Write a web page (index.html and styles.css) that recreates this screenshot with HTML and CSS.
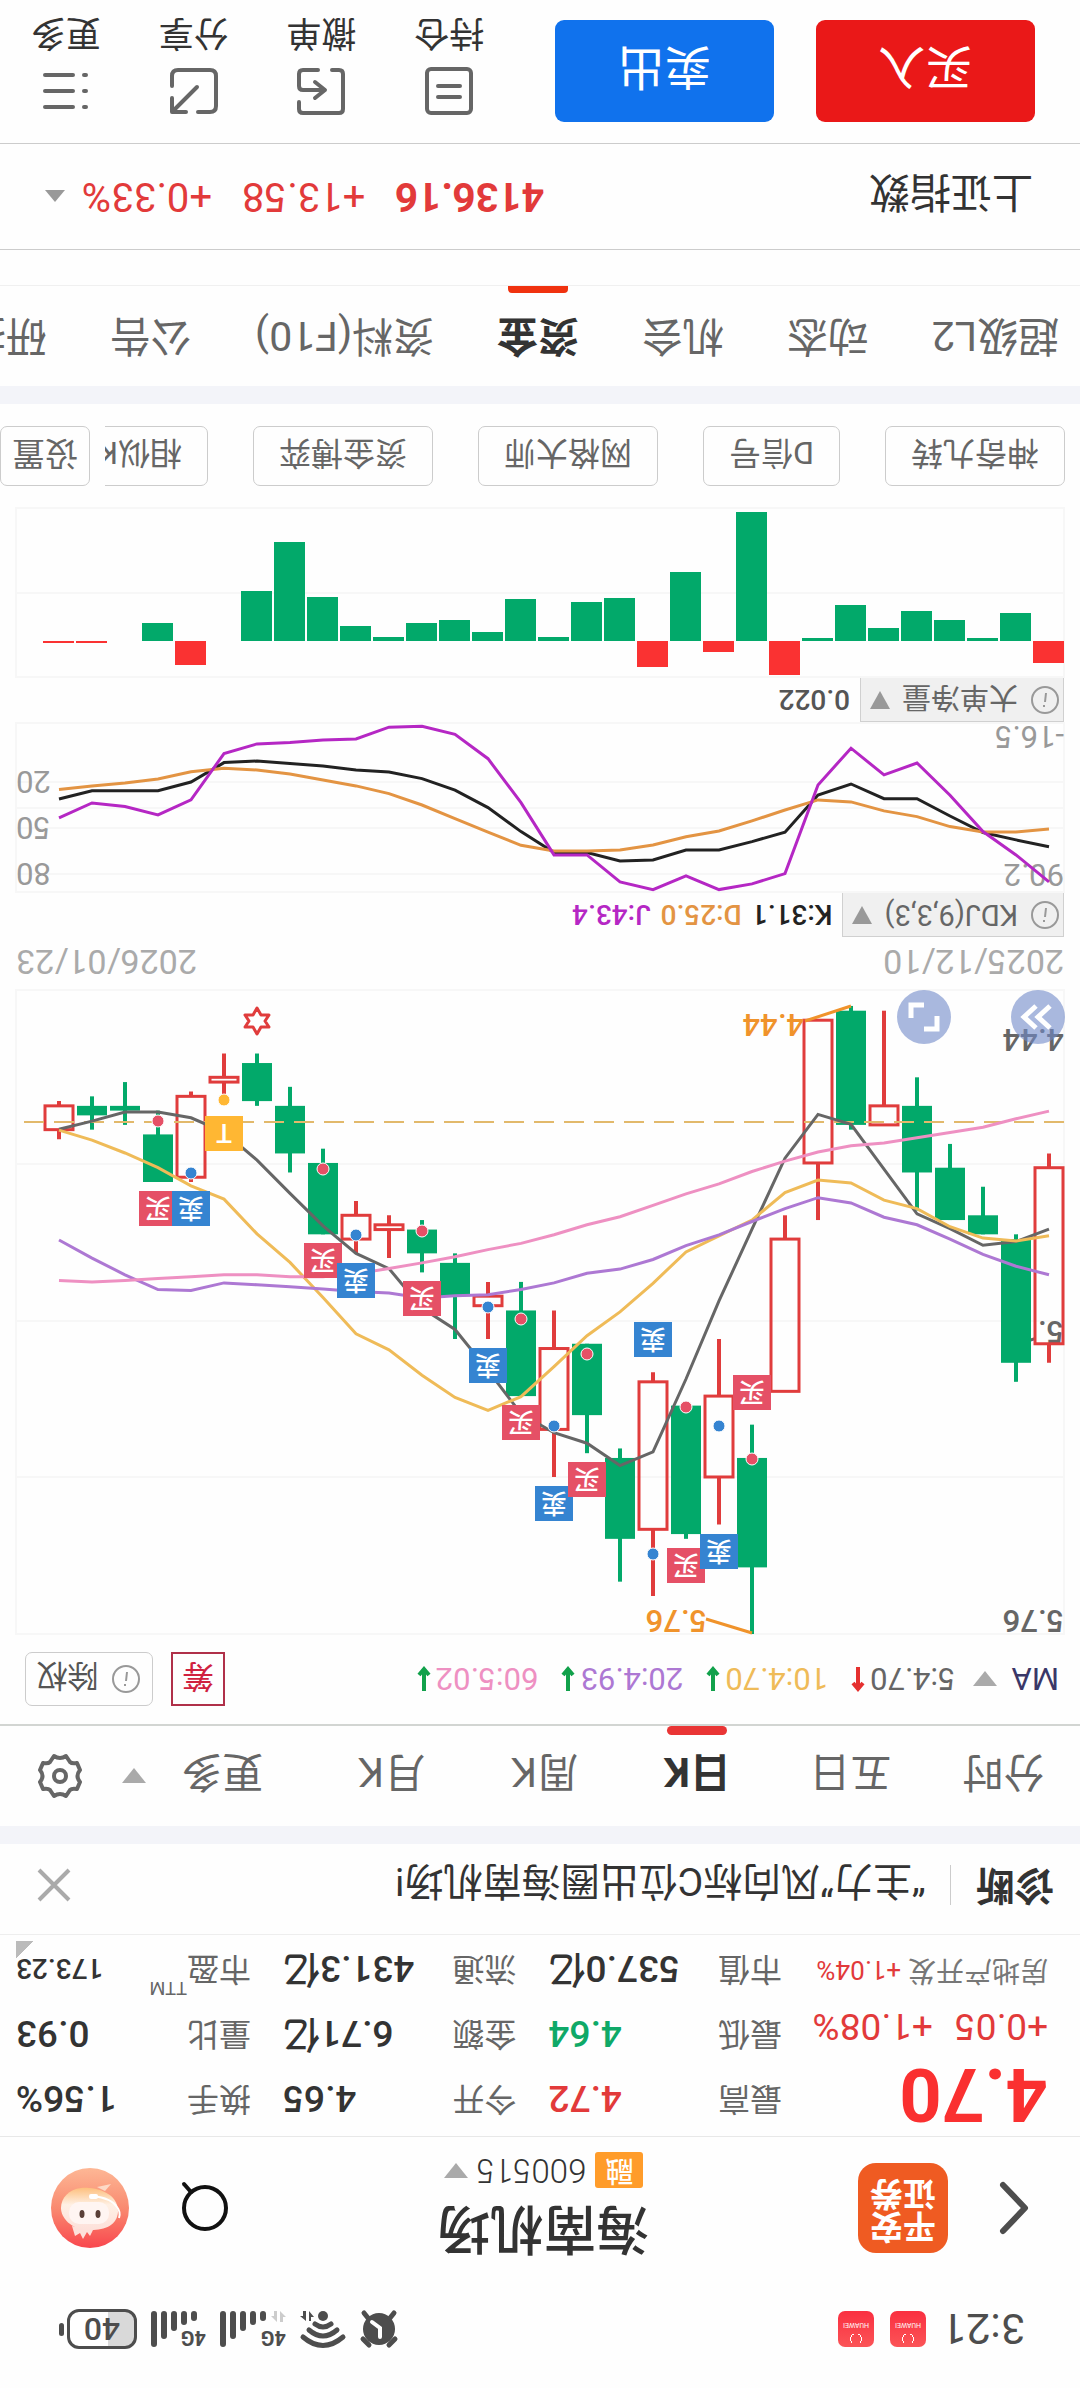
FILE: index.html
```html
<!DOCTYPE html>
<html lang="zh-CN">
<head>
    <meta charset="UTF-8">
    <meta name="viewport" content="width=device-width, initial-scale=1">
    <title>海南机场 600515</title>
    <link rel="stylesheet" href="styles.css">
</head>
<body>
<div class="phone">

    <div class="status-bar">
        <span class="clock">3:21</span>
        <span class="app-badge">HUAWEI</span>
        <span class="app-badge">HUAWEI</span>
        <div class="status-icons">
            <svg width="38" height="38" viewBox="0 0 38 38" fill="none" stroke="#4d4d4d" stroke-width="5" stroke-linecap="round">
                <circle cx="19" cy="19" r="16" fill="#4d4d4d" stroke="none"/>
                <path d="M3 9l6-6M35 9l-6-6M8 30l-4 5M30 30l4 5"/>
                <path d="M18 11v9l8 6" stroke="#fff" stroke-width="4"/>
            </svg>
            <svg width="46" height="38" viewBox="0 0 46 38" fill="none" stroke="#4d4d4d" stroke-width="5" stroke-linecap="round">
                <path d="M3 11q20-17 40 0M9 18q14-12 28 0M15 24q8-6 16 0"/>
                <circle cx="23" cy="32" r="5" fill="#4d4d4d" stroke="none"/>
                <path d="M37 27v10l-5-6h3v-4zM40 37v-10l6 5h-3v5z" fill="#4d4d4d" stroke="none"/>
            </svg>
            <svg width="66" height="38" viewBox="0 0 66 38" fill="none" stroke="#4d4d4d" stroke-width="6" stroke-linecap="round">
                <path d="M23 30v4M33 26v8M43 20v14M53 12v22M63 4v30"/>
                <path d="M6 26v11l-6-6h3v-5zM9 37v-11l6 6h-3v5z" fill="#ccc" stroke="none"/>
                <text class="net" x="0" y="17">4G</text>
            </svg>
            <svg width="55" height="38" viewBox="0 0 55 38" fill="none" stroke="#4d4d4d" stroke-width="6" stroke-linecap="round">
                <path d="M12 30v4M22 26v8M32 20v14M42 12v22M52 4v30"/>
                <text class="net" x="0" y="17">4G</text>
            </svg>
            <span class="battery">40</span>
        </div>
    </div>

    <header class="title-bar">
        <button class="icon-btn" aria-label="返回">
            <svg width="30" height="54" viewBox="0 0 30 54" fill="none" stroke="#4d4d4d" stroke-width="6" stroke-linecap="round" stroke-linejoin="round"><path d="M26 4L4 27l22 23"/></svg>
        </button>
        <a class="broker" href="#">平安<br>证券</a>
        <div class="stock">
            <h1>海南机场</h1>
            <p><span class="rong">融</span>600515<i class="down"></i></p>
        </div>
        <button class="icon-btn" aria-label="搜索">
            <svg width="48" height="54" viewBox="0 0 48 54" fill="none" stroke="#111" stroke-width="4" stroke-linecap="round"><circle cx="24" cy="27" r="21"/><path d="M38 43l7 8"/></svg>
        </button>
        <button class="icon-btn avatar" aria-label="智能助手">
            <svg width="78" height="80" viewBox="0 0 78 80">
                <defs>
                    <linearGradient id="skin" x1="0" y1="0" x2="0" y2="1"><stop offset="0" stop-color="#f9474e"/><stop offset=".5" stop-color="#f98a70"/><stop offset="1" stop-color="#fdb795"/></linearGradient>
                    <linearGradient id="hood" x1="0" y1="0" x2="0" y2="1"><stop offset="0" stop-color="#fde0da"/><stop offset=".6" stop-color="#fff0e4"/><stop offset="1" stop-color="#fdc07e"/></linearGradient>
                </defs>
                <ellipse cx="39" cy="40" rx="39" ry="40" fill="url(#skin)"/>
                <path d="M36 18l3-6 3 4 4-7 3 6 5-3 3 10z" fill="#fde0da"/>
                <path d="M24 57l-6 7 14-3z" fill="#fcd9c6"/>
                <path d="M11 36C12 22 26 17 42 18s26 12 26 22-8 19-20 20-37-3-37-24z" fill="url(#hood)"/>
                <rect x="20" y="24" width="40" height="22" rx="10" fill="#fff5f2"/>
                <ellipse cx="31" cy="34" rx="2.5" ry="4" fill="#5a4038"/>
                <ellipse cx="47" cy="34" rx="2.5" ry="4" fill="#5a4038"/>
                <path d="M10 30q-2 6 2 11 6 9 24 11" fill="none" stroke="#fff" stroke-width="2"/>
                <rect x="31" y="49" width="9" height="5" rx="2" fill="#fff"/>
            </svg>
        </button>
    </header>

    <section class="quote">
        <div class="price">
            <strong>4.70</strong>
            <p class="change"><span>+0.05</span><span>+1.08%</span></p>
            <p class="sector">房地产开发 <span>+1.04%</span></p>
        </div>
        <table>
            <tr><th>最高</th><td class="red">4.72</td><th>今开</th><td>4.65</td><th>换手</th><td>1.56%</td></tr>
            <tr><th>最低</th><td class="green">4.64</td><th>金额</th><td>6.71亿</td><th>量比</th><td>0.93</td></tr>
            <tr><th>市值</th><td>537.0亿</td><th>流通</th><td>431.3亿</td><th>市盈<sup>TTM</sup></th><td class="pe">173.23</td></tr>
        </table>
    </section>

    <section class="diagnose">
        <b>诊断</b>
        <a href="#">“主力”风向标C位出圈海南机场!</a>
        <button class="icon-btn" aria-label="关闭">
            <svg width="32" height="32" viewBox="0 0 32 32" stroke="#aaa" stroke-width="4"><path d="M1 1l30 30M31 1L1 31"/></svg>
        </button>
    </section>

    <div class="band"></div>

    <nav class="periods">
        <button>分时</button>
        <button>五日</button>
        <button class="on">日K</button>
        <button>周K</button>
        <button>月K</button>
        <button class="more">更多</button>
        <i class="down"></i>
        <button class="gear" aria-label="设置">
            <svg width="44" height="44" viewBox="0 0 44 44" fill="none" stroke="#666" stroke-width="4" stroke-linejoin="round"><path d="M16 2q6 4 12 0l4 6q2 2 7 1l3 7q-5 6 0 12l-3 7q-5-1-7 1l-4 6q-6-4-12 0l-4-6q-2-2-7-1l-3-7q5-6 0-12l3-7q5 1 7-1z"/><circle cx="22" cy="22" r="6"/></svg>
        </button>
    </nav>

    <section class="ma-row">
        <span class="ma-name">MA</span><i class="down"></i>
        <span class="ma5">5:4.70</span><svg class="arrow" viewBox="0 0 16 24"><path d="M8 24V4M3 8l5-6 5 6" stroke="#e5302f"/></svg>
        <span class="ma10">10:4.70</span><svg class="arrow" viewBox="0 0 16 24"><path d="M8 0v20M3 16l5 6 5-6" stroke="#11a14b"/></svg>
        <span class="ma20">20:4.93</span><svg class="arrow" viewBox="0 0 16 24"><path d="M8 0v20M3 16l5 6 5-6" stroke="#11a14b"/></svg>
        <span class="ma60">60:5.02</span><svg class="arrow" viewBox="0 0 16 24"><path d="M8 0v20M3 16l5 6 5-6" stroke="#11a14b"/></svg>
        <button class="chip-dist">筹</button>
        <button class="adjust"><svg class="info" viewBox="0 0 30 30"><circle cx="15" cy="15" r="13"/><path d="M16 8v2M15 13l-1 9"/></svg>除权</button>
    </section>

    <svg class="chart" id="kline" viewBox="0 0 1048 644"></svg>

    <div class="dates"><span>2025/12/10</span><span>2026/01/23</span></div>

    <div class="indicator">
        <button><svg class="info" viewBox="0 0 30 30"><circle cx="15" cy="15" r="13"/><path d="M16 8v2M15 13l-1 9"/></svg>KDJ(9,3,3)<i class="down"></i></button>
        <span class="k">K:31.1</span><span class="d">D:25.0</span><span class="j">J:43.4</span>
    </div>
    <svg class="chart" id="kdj" viewBox="0 0 1048 169"></svg>

    <div class="indicator">
        <button><svg class="info" viewBox="0 0 30 30"><circle cx="15" cy="15" r="13"/><path d="M16 8v2M15 13l-1 9"/></svg>大单净量<i class="down"></i></button>
        <span>0.022</span>
    </div>
    <svg class="chart" id="netflow" viewBox="0 0 1048 169"></svg>

    <div class="tools">
        <div class="tool-list">
            <button>神奇九转</button>
            <button>D信号</button>
            <button>网格大师</button>
            <button>资金博弈</button>
            <button>相似K线</button>
        </div>
        <button class="setup">设置</button>
    </div>

    <div class="band"></div>

    <nav class="tabs">
        <a href="#">超级L2</a>
        <a href="#">动态</a>
        <a href="#">机会</a>
        <a href="#" class="on">资金</a>
        <a href="#">资料(F10)</a>
        <a href="#">公告</a>
        <a href="#">研报</a>
    </nav>

    <div class="index-row">
        <span class="index-name">上证指数</span>
        <b>4136.16</b>
        <span>+13.58</span>
        <span>+0.33%</span>
        <i class="up"></i>
    </div>

    <footer class="actions">
        <button class="trade buy">买入</button>
        <button class="trade sell">卖出</button>
        <button class="act">
            <svg viewBox="0 0 48 48"><rect x="2" y="2" width="44" height="44" rx="4"/><path d="M13 18h22M13 29h22"/></svg>
            持仓
        </button>
        <button class="act">
            <svg viewBox="0 0 48 48"><path d="M27 45h15q4 0 4-4V29q0-4-4-4H22M30 33l-10-8 10-8M13 45H6q-4 0-4-4V6q0-4 4-4h36q4 0 4 4v7"/></svg>
            撤单
        </button>
        <button class="act">
            <svg viewBox="0 0 48 48"><path d="M46 29v10q0 6-6 6H8q-6 0-6-6V9q0-6 6-6h12M21 28L45 4M46 17V3H32"/></svg>
            分享
        </button>
        <button class="act">
            <svg viewBox="0 0 48 48"><path d="M4 8h2M17 8h28M4 24h2M17 24h28M4 40h2M17 40h28"/></svg>
            更多
        </button>
    </footer>

</div>
<script src="chart.js"></script>
</body>
</html>
```
FILE: styles.css
```css
* {
    box-sizing: border-box;
}
body, h1, p, table {
    margin: 0;
    padding: 0;
}
body {
    background: #fff;
    color: #333;
    font-family: Roboto, "Noto Sans CJK SC", sans-serif;
    overflow-x: hidden;
}
button {
    margin: 0;
    padding: 0;
    border: 0;
    background: none;
    color: inherit;
    font: inherit;
    white-space: nowrap;
}
a {
    color: inherit;
    text-decoration: none;
}
svg {
    display: block;
    flex-shrink: 0;
    overflow: visible;
}
.phone {
    background: #fefefe;
    overflow: hidden;
    transform: rotate(180deg);
}
.icon-btn {
    display: flex;
}
.down, .up {
    border: 12px solid transparent;
    border-top: 15px solid #aaa;
    border-bottom: 0;
}
.up {
    border-width: 0 10px 12px;
    border-bottom: 12px solid #999;
}
.band {
    height: 18px;
    background: #f3f4f9;
}

/* status bar */
.status-bar {
    display: flex;
    align-items: center;
    gap: 16px;
    height: 118px;
    padding: 0 59px 0 55px;
}
.clock {
    color: #4d4d4d;
    font-size: 43px;
}
.app-badge {
    width: 36px;
    height: 36px;
    padding-top: 14px;
    border-radius: 7px;
    background: radial-gradient(circle at 18px 4px, transparent 5px, #fff 5px, #fff 6px, transparent 6px) 0 4px / 36px 9px no-repeat, linear-gradient(#fb5457, #fa2f40);
    color: #fff;
    font-size: 7px;
    line-height: 16px;
    text-align: center;
}
.status-icons {
    display: flex;
    align-items: center;
    gap: 14px;
    margin-left: auto;
}
.net {
    fill: #4d4d4d;
    stroke: none;
    font-size: 20px;
    font-weight: 700;
}
.battery {
    position: relative;
    width: 70px;
    margin-right: 8px;
    border: 3px solid #4d4d4d;
    border-radius: 12px;
    background: linear-gradient(90deg, #d9d9d9 40%, #fff 40%);
    color: #4d4d4d;
    font-size: 32px;
    font-weight: 500;
    line-height: 34px;
    text-align: center;
}
.battery::after {
    content: "";
    position: absolute;
    top: 10px;
    right: -11px;
    width: 5px;
    height: 13px;
    border-radius: 3px;
    background: #4d4d4d;
}

/* title */
.title-bar {
    display: flex;
    align-items: center;
    height: 134px;
    padding: 0 51px;
    padding-bottom: 9px;
    border-bottom: 1px solid #e8e8e8;
}
.broker {
    width: 90px;
    margin-left: 51px;
    padding: 10px 0 14px;
    border-radius: 18px;
    background: #ef5b22;
    color: #fff;
    font-size: 33px;
    font-weight: 700;
    line-height: 33px;
    text-align: center;
}
.stock {
    flex: 1;
    text-align: center;
}
.stock h1 {
    padding-top: 3px;
    font-size: 53px;
    font-weight: 500;
    line-height: 64px;
}
.stock p {
    display: flex;
    justify-content: center;
    align-items: center;
    gap: 9px;
    margin-top: 8px;
    font-size: 33px;
    font-weight: 300;
    line-height: 36px;
}
.rong {
    width: 48px;
    border-radius: 3px;
    background: #ff9c2a;
    color: #fff;
    font-size: 28px;
    font-weight: 500;
}
.avatar {
    margin-left: 52px;
}

/* quote */
.quote {
    display: flex;
    padding: 5px 16px 1px 32px;
    border-bottom: 1px solid #eee;
}
.price {
    flex: none;
    width: 266px;
    color: #fa3030;
}
.price strong {
    display: block;
    font-size: 74px;
    line-height: 74px;
}
.change {
    display: flex;
    gap: 22px;
    padding-top: 8px;
    font-size: 37px;
    line-height: 46px;
    color: #e23a3a;
}
.sector {
    padding-top: 16px;
    color: #777;
    font-size: 28px;
    line-height: 34px;
    white-space: nowrap;
}
.sector span {
    color: #e23a3a;
    font-size: 26px;
}
.quote table {
    width: 100%;
    border-spacing: 0;
    table-layout: fixed;
}
.quote th {
    width: 64px;
    padding: 0;
    color: #666;
    font-size: 32px;
    font-weight: 400;
    line-height: 65px;
    text-align: left;
    white-space: nowrap;
}
.quote td {
    padding: 0 32px 0 0;
    font-size: 37px;
    font-weight: 500;
    line-height: 65px;
    text-align: right;
    white-space: nowrap;
}
.quote td:last-child {
    width: 171px;
    padding-right: 0;
}
.quote sup {
    font-size: 18px;
    line-height: 0;
    vertical-align: 24px;
}
.quote .pe {
    background: linear-gradient(135deg, transparent 50%, #bbb 50%) right bottom 5px / 18px 18px no-repeat;
    font-size: 28px;
}
.quote .red {
    color: #e23a3a;
}
.quote .green {
    color: #0fa968;
}

/* diagnosis */
.diagnose {
    display: flex;
    align-items: center;
    height: 90px;
    padding: 8px 38px 0 26px;
    font-size: 39px;
}
.diagnose b {
    padding-right: 25px;
    border-right: 1px solid #ccc;
    line-height: 40px;
}
.diagnose a {
    flex: 1;
    padding-left: 24px;
}

/* periods */
.periods {
    display: flex;
    align-items: center;
    height: 102px;
    padding-right: 38px;
    border-bottom: 2px solid #d2d5d2;
    color: #666;
    font-size: 41px;
}
.periods button {
    position: relative;
    flex: 1;
    height: 100px;
}
.periods .more {
    padding-left: 16px;
}
.periods .on {
    color: #333;
    font-weight: 700;
}
.periods .on::after, .tabs .on::after {
    content: "";
    position: absolute;
    bottom: 0;
    left: 50%;
    width: 60px;
    height: 9px;
    margin-left: -30px;
    border-radius: 5px;
    background: #e93535;
}
.periods .gear {
    flex: none;
    display: flex;
    align-items: center;
    margin-left: 40px;
}

/* moving averages */
.ma-row {
    display: flex;
    align-items: center;
    height: 90px;
    padding: 0 25px 0 21px;
    font-size: 31px;
}
.ma-name {
    color: #3a3768;
}
.ma-row .down {
    margin: 0 18px 0 14px;
}
.ma5 {
    color: #666;
}
.ma10 {
    color: #efbb58;
}
.ma20 {
    color: #ad78d3;
}
.ma60 {
    color: #ee90c2;
}
.arrow {
    width: 16px;
    height: 24px;
    margin: 0 22px 0 4px;
    fill: none;
    stroke-width: 4;
}
.chip-dist {
    width: 54px;
    height: 54px;
    margin-left: auto;
    border: 2px solid #b03049;
    color: #d0213f;
    font-size: 32px;
}
.adjust {
    display: flex;
    align-items: center;
    justify-content: center;
    gap: 13px;
    width: 128px;
    height: 54px;
    margin-left: 18px;
    border: 1px solid #ccc;
    border-radius: 7px;
    color: #555;
    font-size: 31px;
}
.info {
    width: 30px;
    height: 30px;
    fill: none;
    stroke: #999;
    stroke-width: 2;
}

/* charts */
.chart {
    width: calc(100% - 32px);
    margin: 0 16px;
}
.chart text {
    font-size: 31px;
}
.frame {
    fill: none;
    stroke: #f7f7f7;
    stroke-width: 2;
}
.chart .mark text {
    fill: #fff;
    font-size: 26px;
    font-weight: 500;
    text-anchor: middle;
}
.dates {
    display: flex;
    justify-content: space-between;
    padding: 8px 16px 4px;
    color: #aaa;
    font-size: 34px;
    line-height: 40px;
}
.indicator {
    display: flex;
    align-items: center;
    gap: 10px;
    height: 46px;
    padding: 0 16px;
    font-size: 28px;
    font-weight: 500;
    color: #555;
}
.indicator button {
    display: flex;
    align-items: center;
    gap: 12px;
    height: 45px;
    padding: 0 9px 0 3px;
    border: 1px solid #d0d0d0;
    background: #f0f0f0;
    color: #666;
    font-size: 29px;
    font-weight: 400;
}
.indicator .down {
    border-width: 18px 10px 0;
    border-top-color: #999;
}
.indicator .k {
    color: #222;
}
.indicator .d {
    color: #e39443;
}
.indicator .j {
    color: #b527c4;
}

/* tool chips */
.tools {
    display: flex;
    padding: 22px 0 22px 15px;
    color: #666;
    font-size: 32px;
}
.tool-list {
    flex: 1;
    display: flex;
    gap: 45px;
    overflow: hidden;
}
.tools button {
    flex-shrink: 0;
    height: 60px;
    padding: 0 25px;
    border: 1px solid #ccc;
    border-radius: 7px;
}
.tools .setup {
    margin-left: 15px;
    padding: 0 11px;
    font-size: 33px;
}

/* info tabs */
.tabs {
    display: flex;
    gap: 63px;
    overflow: hidden;
    padding-left: 21px;
    border-bottom: 1px solid #f0f0f0;
    color: #666;
    font-size: 41px;
    line-height: 100px;
    white-space: nowrap;
}
.tabs a {
    position: relative;
}
.tabs .on {
    color: #333;
    font-weight: 700;
}
.tabs .on::after {
    height: 7px;
    border-radius: 4px 4px 0 0;
    background: #f0320f;
}

/* index */
.index-row {
    display: flex;
    align-items: center;
    gap: 30px;
    height: 107px;
    margin-top: 35px;
    padding: 0 45px 0 47px;
    border: 1px solid #ccc;
    border-width: 1px 0;
    color: #e23a3a;
    font-size: 40px;
}
.index-name {
    margin-right: auto;
    color: #333;
    font-size: 41px;
}
.index-row .up {
    margin-left: -13px;
}

/* bottom actions */
.actions {
    display: flex;
    align-items: center;
    height: 143px;
    padding: 0 2px 0 45px;
}
.trade {
    flex: none;
    width: 219px;
    height: 102px;
    margin-right: 42px;
    border-radius: 9px;
    color: #fff;
    font-size: 47px;
}
.buy {
    background: #ea1818;
}
.sell {
    background: #1072ed;
}
.act {
    flex: 1;
    display: flex;
    flex-direction: column;
    align-items: center;
    gap: 13px;
    padding-top: 18px;
    color: #333;
    font-size: 35px;
    line-height: 44px;
}
.act svg {
    width: 48px;
    height: 48px;
    fill: none;
    stroke: #666;
    stroke-width: 4;
    stroke-linecap: round;
    stroke-linejoin: round;
}
```
FILE: chart.js
```js
const STEP = 33;
const RED = "#e03c3c";
const GREEN = "#02a96a";
const cx = i => 15 + STEP * i;

// open, close, low, high
const days = [
    [4.78, 5.15, 4.75, 5.19], [5.19, 4.93, 4.92, 5.23], [4.92, 4.88, 4.82, 4.92], [4.89, 4.78, 4.73, 4.89],
    [4.79, 4.65, 4.59, 4.87], [4.65, 4.69, 4.45, 4.69], [4.69, 4.45, 4.44, 4.70], [4.47, 4.77, 4.47, 4.89],
    [4.93, 5.25, 4.88, 5.25], [5.62, 5.39, 5.32, 5.76], [5.26, 5.43, 5.14, 5.53], [5.55, 5.28, 5.28, 5.56],
    [5.23, 5.54, 5.21, 5.68], [5.56, 5.39, 5.37, 5.65], [5.30, 5.15, 5.15, 5.38], [5.16, 5.33, 5.08, 5.43],
    [5.26, 5.08, 5.02, 5.26], [5.05, 5.07, 5.02, 5.14], [5.05, 4.98, 4.96, 5.14], [4.96, 4.91, 4.89, 5.00],
    [4.90, 4.91, 4.88, 4.97], [4.88, 4.93, 4.85, 4.96], [4.92, 4.77, 4.74, 4.92], [4.75, 4.65, 4.61, 4.79],
    [4.64, 4.56, 4.54, 4.65], [4.59, 4.60, 4.54, 4.63], [4.63, 4.80, 4.62, 4.81], [4.81, 4.71, 4.66, 4.81],
    [4.66, 4.65, 4.60, 4.69], [4.67, 4.65, 4.63, 4.70], [4.65, 4.70, 4.64, 4.72]
];
const ma = {
    "#666": [4.909, 4.935, 4.943, 4.908, 4.877, 4.783, 4.689, 4.668, 4.76, 4.909, 5.06, 5.224, 5.377, 5.406, 5.359, 5.337, 5.297, 5.206, 5.12, 5.075, 4.992, 4.96, 4.902, 4.834, 4.764, 4.705, 4.675, 4.663, 4.663, 4.682, 4.699],
    "#efbb58": [4.923, 4.934, 4.928, 4.904, 4.866, 4.848, 4.812, 4.806, 4.832, 4.89, 4.923, 4.957, 5.023, 5.083, 5.133, 5.198, 5.261, 5.29, 5.263, 5.216, 5.163, 5.129, 5.053, 4.979, 4.919, 4.846, 4.818, 4.78, 4.749, 4.722, 4.701],
    "#ad78d3": [5.005, 4.987, 4.962, 4.93, 4.9, 4.884, 4.854, 4.843, 4.866, 4.893, 4.921, 4.944, 4.973, 4.993, 5.002, 5.022, 5.036, 5.047, 5.049, 5.054, 5.043, 5.04, 5.035, 5.03, 5.026, 5.022, 5.038, 5.036, 5.005, 4.97, 4.932],
    "#ee90c2": [4.661, 4.677, 4.695, 4.706, 4.717, 4.728, 4.734, 4.747, 4.766, 4.788, 4.814, 4.835, 4.859, 4.883, 4.9, 4.921, 4.939, 4.952, 4.967, 4.98, 4.992, 5.003, 5.009, 5.009, 5.005, 5.005, 5.009, 5.013, 5.017, 5.02, 5.017]
};
// day, label, y of the tag, y of the dot
const trades = [
    [27, "买", 425, 513], [26, "卖", 425, 461], [25, "T", 500, 534], [22, "买", 373, 465], [21, "卖", 353, 399],
    [19, "买", 335, 403], [17, "卖", 268, 327], [16, "买", 211, 315], [15, "卖", 130, 208], [14, "买", 154, 280],
    [12, "卖", 294, 80], [11, "买", 68, 227], [10, "卖", 82, 208], [9, "买", 241, 175]
];
const tagColor = { "买": "#e55066", "卖": "#3584d1", "T": "#ffb733" };
const kdj = {
    "#222": [62.2, 57.8, 53, 42.2, 30.9, 30.9, 21.3, 28.5, 52.8, 58.9, 64.4, 64.4, 70.9, 71.5, 66.1, 66.1, 52.4, 36.7, 25.4, 17.8, 13.5, 12.2, 9.6, 8, 6.3, 7.4, 20, 25.7, 25.7, 25.7, 31.1],
    "#e39443": [50.7, 52.6, 52.6, 49.1, 42.6, 38.9, 33, 31.7, 38.3, 45.4, 52, 55.7, 61.1, 64.4, 65, 65, 61.3, 52.8, 43.9, 35, 27.6, 22.6, 18.7, 14.8, 12.2, 11.1, 13.3, 18, 20.7, 22.6, 25],
    "#b527c4": [85.2, 67.6, 52.4, 28.7, 7.6, 15.4, -2, 22, 79.8, 86.5, 90.2, 81.3, 90.2, 85.2, 67.6, 67.6, 33.5, 4.8, -11.1, -16.3, -15.7, -8, -7.4, -5.7, -4.8, 1.5, 31.7, 41.5, 36.1, 33.7, 43.4]
};
const flow = [22, -28, -3, -21, -30, -13, -36, -3, 34, -129, 11, -69, 26, -43, -39, -4, -42, -9, -21, -18, -4, -15, -44, -99, -50, 0, 24, -18, 0, 2, 2];

function line(values, y, color) {
    const points = values.map((v, i) => cx(i) + "," + y(v).toFixed(1)).join(" ");
    return `<polyline points="${points}" fill="none" stroke="${color}" stroke-width="3"/>`;
}
function label(x, y, text, color, extra = "") {
    return `<text x="${x}" y="${y}" fill="${color}" ${extra}>${text}</text>`;
}
function frame(h, rows) {
    return `<path class="frame" d="M0 0H1048V${h}H0Z${rows.map(y => `M0 ${y}H1048`).join("")}"/>`;
}

function drawKline() {
    const y = p => (5.76 - p) * 475.8;
    let out = frame(644, [157, 313, 470]);
    out += label(0, 24, "5.76", "#666", `font-weight="500"`) + label(0, 313, "5.10", "#666", `font-weight="500"`) + label(0, 605, "4.44", "#666", `font-weight="500"`);
    days.forEach(([open, close, low, high], i) => {
        const top = y(Math.max(open, close));
        const bottom = y(Math.min(open, close));
        const x = cx(i);
        if (close > open) {
            out += `<path d="M${x} ${y(high)}V${top}M${x} ${bottom}V${y(low)}" stroke="${RED}" stroke-width="4"/>
                <rect x="${x - 14}" y="${top}" width="28" height="${bottom - top}" fill="none" stroke="${RED}" stroke-width="3"/>`;
        } else {
            out += `<path d="M${x} ${y(high)}V${y(low)}" stroke="${GREEN}" stroke-width="4"/>
                <rect x="${x - 15}" y="${top}" width="30" height="${Math.max(bottom - top, 4)}" fill="${GREEN}"/>`;
        }
    });
    out += `<path d="M0 512H1040" stroke="#e2b96b" stroke-width="2" stroke-dasharray="20 10"/>`;
    for (const color in ma) out += line(ma[color], y, color);
    out += `<path d="M358 15L312 1M259 613L213 628" stroke="#f0932b" stroke-width="3"/>`;
    out += label(357, 24, "5.76", "#f0932b", `font-weight="500"`) + label(260, 620, "4.44", "#f0932b", `font-weight="500"`);
    trades.forEach(([i, text, tagY, dotY]) => {
        out += `<g class="mark"><circle cx="${cx(i)}" cy="${dotY}" r="6" fill="${tagColor[text]}" stroke="#fff"/>
            <rect x="${cx(i) - 19}" y="${tagY - 17}" width="38" height="35" fill="${tagColor[text]}"/>
            <text x="${cx(i)}" y="${tagY + 10}">${text}</text></g>`;
    });
    out += `<path d="M807 600l4 7h8l-4 6 4 6h-8l-4 7-4-7h-8l4-6-4-6h8z" fill="none" stroke="${RED}" stroke-width="3" stroke-linejoin="round"/>`;
    out += `<g fill="none" stroke="#fff" stroke-width="5">
        <circle cx="26" cy="617" r="27" fill="#7089c8" fill-opacity=".6" stroke="none"/><path d="M14 606l12 11-12 11M28 606l12 11-12 11"/>
        <circle cx="140" cy="617" r="27" fill="#7089c8" fill-opacity=".6" stroke="none"/><path d="M127 618v-13h13M153 616v13h-13"/></g>`;
    document.getElementById("kline").innerHTML = out;
}

function drawKdj() {
    const y = v => 140.7 - v * 1.533;
    let out = frame(169, [18, 64, 84, 110]);
    out += label(0, 28, "90.2", "#999") + label(0, 166, "-16.5", "#999");
    [80, 50, 20].forEach(v => out += label(1048, Math.round(y(v)) + 11, v, "#999", `text-anchor="end"`));
    for (const color in kdj) out += line(kdj[color], y, color);
    document.getElementById("kdj").innerHTML = out;
}

function drawFlow() {
    let out = frame(169, [84]);
    flow.forEach((h, i) => {
        out += `<rect x="${cx(i) - 15}" y="${h > 0 ? 36 - h : 36}" width="31" height="${Math.abs(h)}" fill="${h > 0 ? "#fa3232" : GREEN}"/>`;
    });
    document.getElementById("netflow").innerHTML = out;
}

drawKline();
drawKdj();
drawFlow();
```
